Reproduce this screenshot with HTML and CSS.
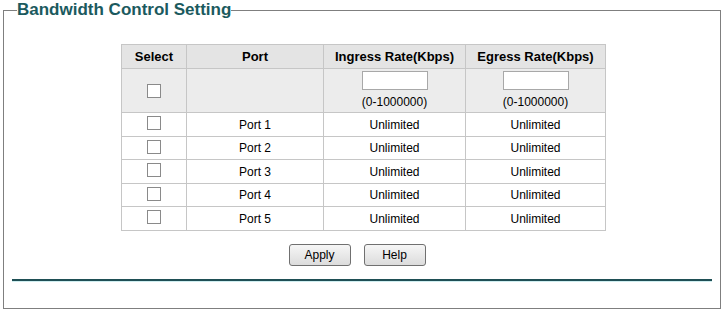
FILE: index.html
```html
<!DOCTYPE html>
<html>
<head>
<meta charset="utf-8">
<link rel="stylesheet" href="styles.css">
</head>
<body>
<fieldset class="panel">
  <legend class="title">Bandwidth Control Setting</legend>
  <div class="content">
    <table class="grid">
      <thead>
        <tr class="head">
          <th class="c-sel">Select</th>
          <th class="c-port">Port</th>
          <th class="c-rate">Ingress Rate(Kbps)</th>
          <th class="c-rate2">Egress Rate(Kbps)</th>
        </tr>
      </thead>
      <tbody>
        <tr class="edit">
          <td><span class="cb"></span></td>
          <td></td>
          <td><div class="field"></div><div class="range">(0-1000000)</div></td>
          <td><div class="field"></div><div class="range">(0-1000000)</div></td>
        </tr>
        <tr class="row"><td><span class="cb"></span></td><td>Port 1</td><td>Unlimited</td><td>Unlimited</td></tr>
        <tr class="row odd"><td><span class="cb"></span></td><td>Port 2</td><td>Unlimited</td><td>Unlimited</td></tr>
        <tr class="row"><td><span class="cb"></span></td><td>Port 3</td><td>Unlimited</td><td>Unlimited</td></tr>
        <tr class="row odd"><td><span class="cb"></span></td><td>Port 4</td><td>Unlimited</td><td>Unlimited</td></tr>
        <tr class="row"><td><span class="cb"></span></td><td>Port 5</td><td>Unlimited</td><td>Unlimited</td></tr>
      </tbody>
    </table>
    <div class="actions">
      <button class="btn">Apply</button>
      <button class="btn">Help</button>
    </div>
    <div class="rule"></div>
  </div>
</fieldset>
</body>
</html>
```
FILE: styles.css
```css
html, body {
  margin: 0;
  padding: 0;
  background: #ffffff;
}
body {
  font-family: "Liberation Sans", Arial, sans-serif;
  font-size: 12px;
  color: #000;
}
.panel {
  margin: 0 4px 0 3px;
  padding: 0 8px 0 12px;
  border: 1px solid #7f7f7f;
  height: 309px;
  box-sizing: border-box;
}
.title {
  padding: 0;
  margin: 0 0 0 1px;
  font-size: 17px;
  font-weight: bold;
  color: #1b5a5e;
  line-height: 20px;
}
.content {
  display: flex;
  flex-direction: column;
  align-items: center;
  padding-top: 24px;
}
.grid {
  border-collapse: collapse;
  margin-right: 1px;
}
.grid th, .grid td {
  border: 1px solid #c6c6c6;
  text-align: center;
  padding: 0;
  font-size: 12px;
}
.head th {
  background: #e4e4e4;
  height: 23px;
  font-weight: bold;
  font-size: 13px;
}
.c-sel { width: 64px; }
.c-port { width: 136px; }
.c-rate { width: 141px; }
.c-rate2 { width: 139px; }
.edit td {
  background: #ececec;
  height: 43px;
  vertical-align: top;
}
.row td {
  height: 23px;
}
.row.odd td {
  height: 22px;
}
.cb {
  display: inline-block;
  width: 12px;
  height: 12px;
  border: 1px solid #8a8a8a;
  background: #fff;
  vertical-align: middle;
}
.edit td:first-child {
  vertical-align: middle;
}
.row .cb {
  margin-top: -4px;
}
.field {
  width: 64px;
  height: 17px;
  margin: 2px auto 0;
  border: 1px solid #a8a8a8;
  background: #fff;
}
.range {
  margin-top: 5px;
  line-height: 14px;
}
.actions {
  display: flex;
  gap: 13px;
  margin-top: 13px;
  margin-right: 14px;
}
.btn {
  font-family: "Liberation Sans", Arial, sans-serif;
  font-size: 12px;
  width: 62px;
  height: 22px;
  padding: 0;
  border: 1px solid #707070;
  border-radius: 3px;
  background: linear-gradient(#f6f6f6, #dcdcdc);
  color: #000;
}
.rule {
  align-self: stretch;
  margin: 13px 0 0 -4px;
  height: 2px;
  background: #1f4f55;
  border-bottom: 1px solid #cfeef0;
}
```
